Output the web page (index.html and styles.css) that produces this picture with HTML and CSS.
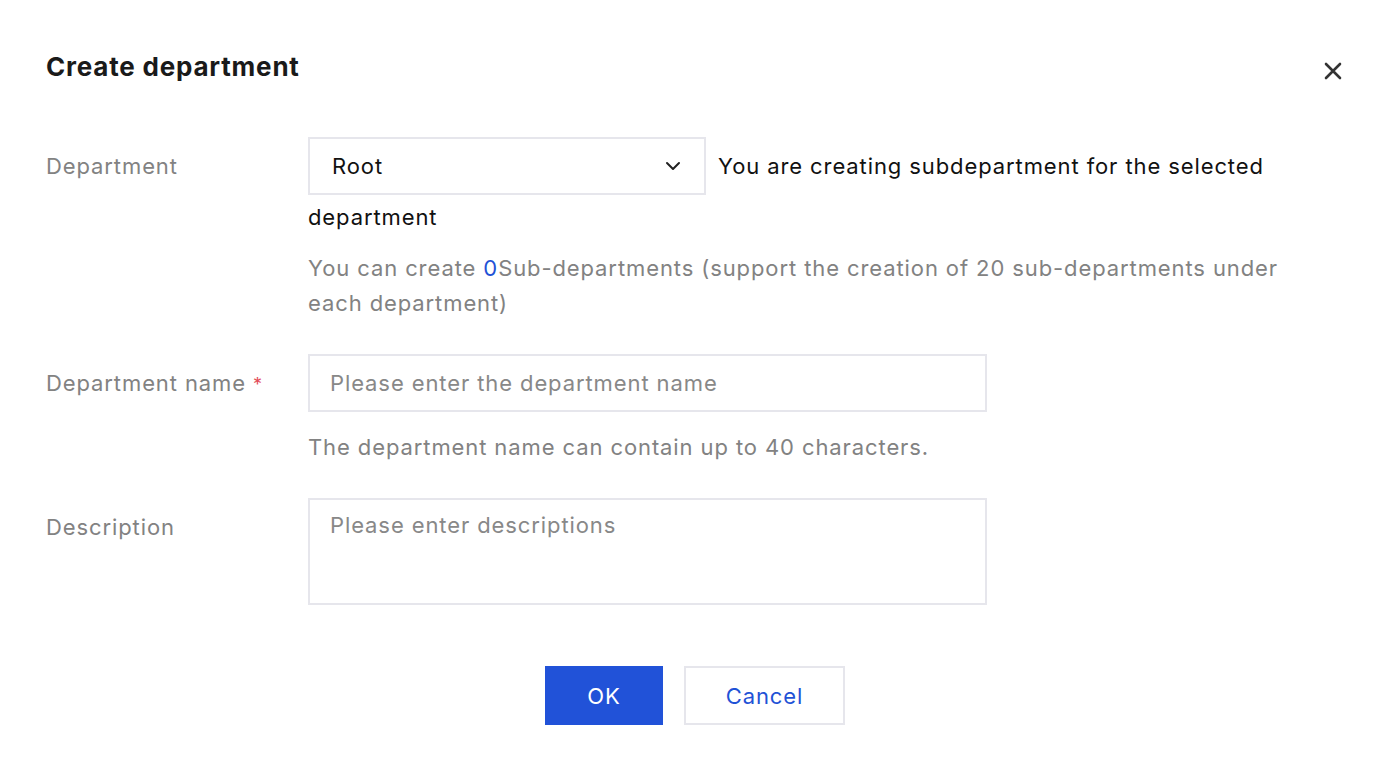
FILE: index.html
```html
<!DOCTYPE html>
<html lang="en">
<head>
  <meta charset="UTF-8">
  <title>Create department</title>
  <link rel="stylesheet" href="styles.css">
</head>
<body>

  <div class="dialog">
    <div class="dialog-header">
      <h2>Create department</h2>
      <button class="close-btn" aria-label="Close">
        <svg width="18" height="18" viewBox="0 0 18 18"><path d="M2 2L16 16M16 2L2 16" stroke="#333" stroke-width="2.6" stroke-linecap="round"/></svg>
      </button>
    </div>

    <form class="form" onsubmit="event.preventDefault();">
      <!-- Department -->
      <div class="form-row">
        <label class="form-label">Department</label>
        <div class="form-control">
          <div class="parent-line">
            <span class="select">
              <span>Root</span>
              <svg width="18" height="18" viewBox="0 0 18 18"><path d="M3 6l6 6 6-6" fill="none" stroke="#222" stroke-width="2" stroke-linecap="round" stroke-linejoin="round"/></svg>
            </span><span class="note">You are creating subdepartment for the selected department</span>
          </div>
          <p class="help help-first">You can create <span class="num">0</span>Sub-departments (support the creation of 20 sub-departments under each department)</p>
        </div>
      </div>

      <!-- Name -->
      <div class="form-row">
        <label class="form-label">Department name <span class="req">*</span></label>
        <div class="form-control">
          <input type="text" class="input" placeholder="Please enter the department name">
          <p class="help">The department name can contain up to 40 characters.</p>
        </div>
      </div>

      <!-- Description -->
      <div class="form-row">
        <label class="form-label">Description</label>
        <div class="form-control">
          <textarea class="textarea" placeholder="Please enter descriptions"></textarea>
        </div>
      </div>

      <div class="form-actions">
        <button type="submit" class="btn btn-primary">OK</button>
        <button type="button" class="btn btn-default">Cancel</button>
      </div>
    </form>
  </div>

</body>
</html>
```

FILE: styles.css
```css
body {
  margin: 0;
  background: #fff;
  font-family: Inter, "Noto Sans", Arial, sans-serif;
  color: #111;
  letter-spacing: 0.9px;
}
.dialog {
  padding: 49px 44px 0 46px;
}
.dialog-header {
  display: flex;
  justify-content: space-between;
  align-items: flex-start;
}
.dialog-header h2 {
  margin: 0;
  font-size: 26px;
  line-height: 36px;
  font-weight: 700;
  letter-spacing: 0.8px;
  color: #1a1a1a;
}
.close-btn {
  background: none;
  border: none;
  padding: 0;
  margin-top: 13px;
  width: 18px;
  height: 18px;
  cursor: pointer;
}
.form {
  margin-top: 52px;
}
.form-row {
  display: flex;
  margin-bottom: 33px;
}
.form-label {
  width: 262px;
  flex-shrink: 0;
  font-size: 22px;
  line-height: 58px;
  color: #828282;
}
.req { color: #e34d59; font-size: 18px; }
.form-control {
  width: 985px;
}
.parent-line {
  font-size: 22px;
  line-height: 40px;
  color: #111;
}
.select {
  display: inline-flex;
  align-items: center;
  justify-content: space-between;
  box-sizing: border-box;
  width: 398px;
  height: 58px;
  padding: 0 22px;
  margin-right: 12px;
  border: 2px solid #e6e6ec;
  vertical-align: middle;
  color: #111;
}
.note {
  vertical-align: -2px;
}
.help {
  margin: 18px 0 0;
  font-size: 22px;
  line-height: 35px;
  color: #828282;
}
.help-first { margin-top: 14px; }
.num { color: #1f52d6; }
.input, .textarea {
  display: block;
  box-sizing: border-box;
  width: 679px;
  border: 2px solid #e6e6ec;
  font-family: inherit;
  font-size: 22px;
  letter-spacing: 0.9px;
  color: #111;
  padding: 0 20px;
  outline: none;
}
.input { height: 58px; }
.textarea {
  height: 107px;
  padding-top: 10px;
  resize: none;
  line-height: 30px;
}
.input::placeholder, .textarea::placeholder { color: #888; }
.form-actions {
  display: flex;
  justify-content: center;
  gap: 21px;
  margin-top: 61px;
  padding-left: 2px;
}
.btn {
  height: 59px;
  font-family: inherit;
  font-size: 22px;
  letter-spacing: 0.9px;
  cursor: pointer;
}
.btn-primary {
  width: 118px;
  background: #2152d8;
  color: #fff;
  border: none;
}
.btn-default {
  width: 161px;
  background: #fff;
  color: #1f52d6;
  border: 2px solid #e6e6ec;
}
```
